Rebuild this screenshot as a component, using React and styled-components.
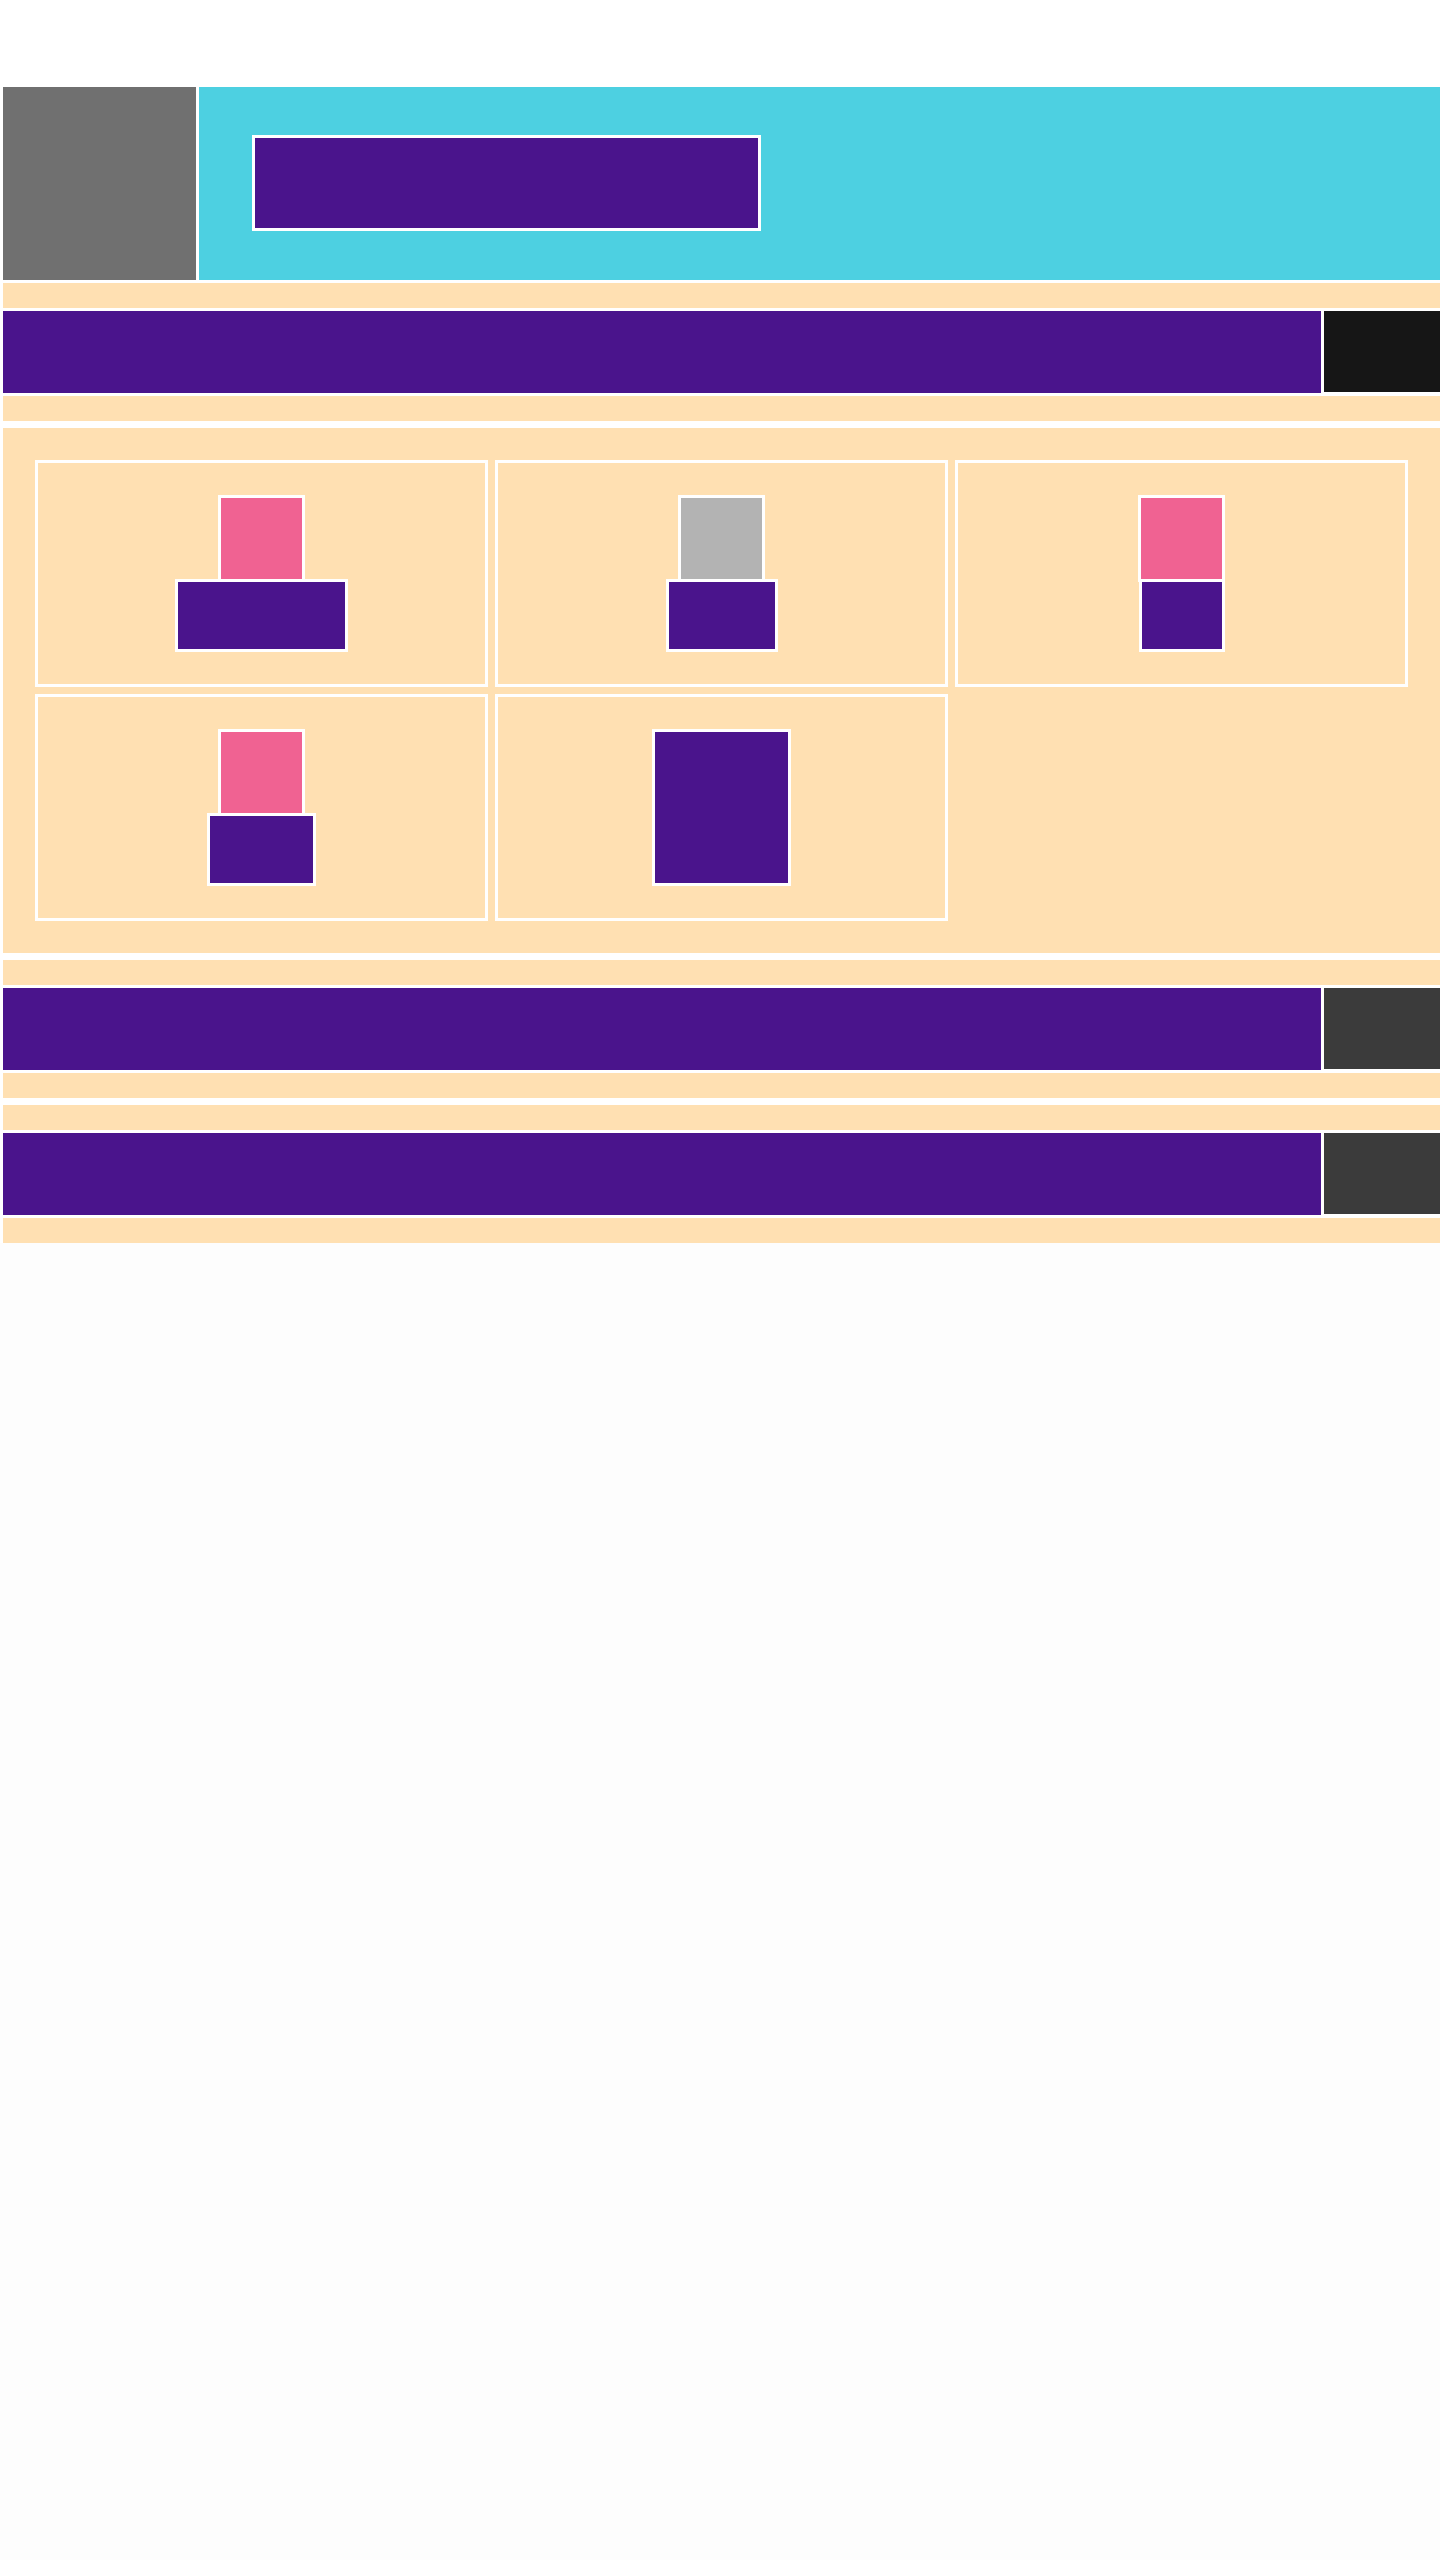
import React from 'react';
import styled, { createGlobalStyle } from 'styled-components';

const PURPLE = '#4a148c';
const CREAM = '#ffe0b2';
const PINK = '#f06292';

const cards = [
    { top: PINK, bottom: [173, 73] },
    { top: '#b3b3b3', bottom: [112, 73] },
    { top: PINK, bottom: [86, 73] },
    { top: PINK, bottom: [109, 73] },
    { top: null, bottom: [139, 157] },
];

const groups = ['#161616', '#3b3b3b', '#3b3b3b'];

const BarGroup = ({ side }) => (
    <Group>
        <CreamStrip />
        <BarRow>
            <MainBar />
            <SideBlock $color={side} />
        </BarRow>
        <CreamStrip />
    </Group>
);

const App = () => {
    return (
        <>
            <GlobalStyle />
            <Page>
                <Header>
                    <Logo />
                    <Hero>
                        <HeroBox />
                    </Hero>
                </Header>
                <Sections>
                    <BarGroup side={groups[0]} />
                    <Panel>
                        {cards.map((card, i) => (
                            <Card key={i}>
                                {card.top && <Block $w={87} $h={87} $color={card.top} />}
                                <Block
                                    $w={card.bottom[0]}
                                    $h={card.bottom[1]}
                                    $color={PURPLE}
                                    $stacked={!!card.top}
                                />
                            </Card>
                        ))}
                    </Panel>
                    <BarGroup side={groups[1]} />
                    <BarGroup side={groups[2]} />
                </Sections>
            </Page>
        </>
    );
};

const GlobalStyle = createGlobalStyle`
    html, body {
        margin: 0;
        padding: 0;
        background: #fdfdfd;
        font-family: "Liberation Sans", Arial, sans-serif;
    }
    * {
        box-sizing: border-box;
    }
`;

const Page = styled.div`
    display: flex;
    flex-direction: column;
    gap: 3px;
    width: 1440px;
    padding: 87px 0 0 3px;
    background: #fff;
    overflow: hidden;
`;

const Header = styled.div`
    display: flex;
    gap: 3px;
    height: 193px;
`;

const Logo = styled.div`
    width: 193px;
    flex-shrink: 0;
    background: #707070;
`;

const Hero = styled.div`
    flex: 1;
    display: flex;
    align-items: center;
    padding-left: 53px;
    background: #4dd0e1;
`;

const HeroBox = styled.div`
    width: 509px;
    height: 96px;
    margin-bottom: 1px;
    border: 3px solid #fff;
    background: ${PURPLE};
`;

const Sections = styled.div`
    display: flex;
    flex-direction: column;
    gap: 7px;
`;

const Group = styled.div`
    display: flex;
    flex-direction: column;
    gap: 3px;
`;

const CreamStrip = styled.div`
    height: 25px;
    background: ${CREAM};
`;

const BarRow = styled.div`
    display: flex;
    gap: 3px;
    height: 82px;
`;

const MainBar = styled.div`
    flex: 1;
    background: ${PURPLE};
`;

const SideBlock = styled.div`
    width: 116px;
    height: 81px;
    flex-shrink: 0;
    background: ${(p) => p.$color};
`;

const Panel = styled.div`
    display: grid;
    grid-template-columns: repeat(3, 453px);
    grid-auto-rows: 227px;
    gap: 7px;
    padding: 32px;
    background: ${CREAM};
`;

const Card = styled.div`
    display: flex;
    flex-direction: column;
    align-items: center;
    justify-content: center;
    border: 3px solid #fff;
`;

const Block = styled.div`
    width: ${(p) => p.$w}px;
    height: ${(p) => p.$h}px;
    margin-top: ${(p) => (p.$stacked ? '-3px' : '0')};
    border: 3px solid #fff;
    background: ${(p) => p.$color};
`;

export default App;
